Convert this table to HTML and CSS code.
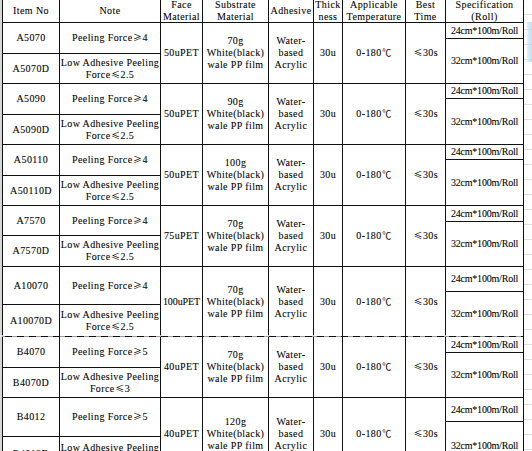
FILE: index.html
```html
<!DOCTYPE html>
<html>
<head>
<meta charset="utf-8">
<link rel="stylesheet" href="styles.css">
</head>
<body>
<div class="page">
  <div class="rowhead"></div>
  <div class="sheet">
    <div class="c"><span>Item No</span></div>
    <div class="c"><span>Note</span></div>
    <div class="c"><span>Face<br>Material</span></div>
    <div class="c"><span>Substrate<br>Material</span></div>
    <div class="c"><span>Adhesive</span></div>
    <div class="c"><span>Thick<br>ness</span></div>
    <div class="c"><span>Applicable<br>Temperature</span></div>
    <div class="c"><span>Best<br>Time</span></div>
    <div class="c"><span>Specification<br>(Roll)</span></div>

    <div class="c s2"><span>A5070</span></div>
    <div class="c s2"><span>Peeling Force<i class="fw">≥</i>4</span></div>
    <div class="c s3"><span>50uPET</span></div>
    <div class="c s3"><span>70g<br>White(black)<br>wale PP film</span></div>
    <div class="c s3"><span>Water-<br>based<br>Acrylic</span></div>
    <div class="c s3"><span>30u</span></div>
    <div class="c s3"><span>0-180<i class="fw">℃</i></span></div>
    <div class="c s3"><span><i class="fw">≤</i>30s</span></div>
    <div class="c sp"><span>24cm*100m/Roll</span></div>
    <div class="c s2 sp"><span>32cm*100m/Roll</span></div>
    <div class="c"><span>A5070D</span></div>
    <div class="c"><span>Low Adhesive Peeling<br>Force<i class="fw">≤</i>2.5</span></div>

    <div class="c s2"><span>A5090</span></div>
    <div class="c s2"><span>Peeling Force<i class="fw">≥</i>4</span></div>
    <div class="c s3"><span>50uPET</span></div>
    <div class="c s3"><span>90g<br>White(black)<br>wale PP film</span></div>
    <div class="c s3"><span>Water-<br>based<br>Acrylic</span></div>
    <div class="c s3"><span>30u</span></div>
    <div class="c s3"><span>0-180<i class="fw">℃</i></span></div>
    <div class="c s3"><span><i class="fw">≤</i>30s</span></div>
    <div class="c sp"><span>24cm*100m/Roll</span></div>
    <div class="c s2 sp"><span>32cm*100m/Roll</span></div>
    <div class="c"><span>A5090D</span></div>
    <div class="c"><span>Low Adhesive Peeling<br>Force<i class="fw">≤</i>2.5</span></div>

    <div class="c s2"><span>A50110</span></div>
    <div class="c s2"><span>Peeling Force<i class="fw">≥</i>4</span></div>
    <div class="c s3"><span>50uPET</span></div>
    <div class="c s3"><span>100g<br>White(black)<br>wale PP film</span></div>
    <div class="c s3"><span>Water-<br>based<br>Acrylic</span></div>
    <div class="c s3"><span>30u</span></div>
    <div class="c s3"><span>0-180<i class="fw">℃</i></span></div>
    <div class="c s3"><span><i class="fw">≤</i>30s</span></div>
    <div class="c sp"><span>24cm*100m/Roll</span></div>
    <div class="c s2 sp"><span>32cm*100m/Roll</span></div>
    <div class="c"><span>A50110D</span></div>
    <div class="c"><span>Low Adhesive Peeling<br>Force<i class="fw">≤</i>2.5</span></div>

    <div class="c s2"><span>A7570</span></div>
    <div class="c s2"><span>Peeling Force<i class="fw">≥</i>4</span></div>
    <div class="c s3"><span>75uPET</span></div>
    <div class="c s3"><span>70g<br>White(black)<br>wale PP film</span></div>
    <div class="c s3"><span>Water-<br>based<br>Acrylic</span></div>
    <div class="c s3"><span>30u</span></div>
    <div class="c s3"><span>0-180<i class="fw">℃</i></span></div>
    <div class="c s3"><span><i class="fw">≤</i>30s</span></div>
    <div class="c sp"><span>24cm*100m/Roll</span></div>
    <div class="c s2 sp"><span>32cm*100m/Roll</span></div>
    <div class="c"><span>A7570D</span></div>
    <div class="c"><span>Low Adhesive Peeling<br>Force<i class="fw">≤</i>2.5</span></div>

    <div class="c s2"><span>A10070</span></div>
    <div class="c s2"><span>Peeling Force<i class="fw">≥</i>4</span></div>
    <div class="c s3 tight"><span>100uPET</span></div>
    <div class="c s3"><span>70g<br>White(black)<br>wale PP film</span></div>
    <div class="c s3"><span>Water-<br>based<br>Acrylic</span></div>
    <div class="c s3"><span>30u</span></div>
    <div class="c s3"><span>0-180<i class="fw">℃</i></span></div>
    <div class="c s3"><span><i class="fw">≤</i>30s</span></div>
    <div class="c sp"><span>24cm*100m/Roll</span></div>
    <div class="c s2 sp"><span>32cm*100m/Roll</span></div>
    <div class="c"><span>A10070D</span></div>
    <div class="c"><span>Low Adhesive Peeling<br>Force<i class="fw">≤</i>2.5</span></div>

    <div class="c s2"><span>B4070</span></div>
    <div class="c s2"><span>Peeling Force<i class="fw">≥</i>5</span></div>
    <div class="c s3"><span>40uPET</span></div>
    <div class="c s3"><span>70g<br>White(black)<br>wale PP film</span></div>
    <div class="c s3"><span>Water-<br>based<br>Acrylic</span></div>
    <div class="c s3"><span>30u</span></div>
    <div class="c s3"><span>0-180<i class="fw">℃</i></span></div>
    <div class="c s3"><span><i class="fw">≤</i>30s</span></div>
    <div class="c sp"><span>24cm*100m/Roll</span></div>
    <div class="c s2 sp"><span>32cm*100m/Roll</span></div>
    <div class="c"><span>B4070D</span></div>
    <div class="c"><span>Low Adhesive Peeling<br>Force<i class="fw">≤</i>3</span></div>

    <div class="c s2"><span>B4012</span></div>
    <div class="c s2"><span>Peeling Force<i class="fw">≥</i>5</span></div>
    <div class="c s3"><span>40uPET</span></div>
    <div class="c s3"><span>120g<br>White(black)<br>wale PP film</span></div>
    <div class="c s3"><span>Water-<br>based<br>Acrylic</span></div>
    <div class="c s3"><span>30u</span></div>
    <div class="c s3"><span>0-180<i class="fw">℃</i></span></div>
    <div class="c s3"><span><i class="fw">≤</i>30s</span></div>
    <div class="c sp"><span>24cm*100m/Roll</span></div>
    <div class="c s2 sp"><span>32cm*100m/Roll</span></div>
    <div class="c"><span>B4012D</span></div>
    <div class="c"><span>Low Adhesive Peeling<br>Force<i class="fw">≤</i>3</span></div>
  </div>
  <div class="side">
    <div class="glow"></div>
  </div>
  <div class="watermark"></div>
</div>
</body>
</html>
```
FILE: styles.css
```css
html, body {
  margin: 0;
  padding: 0;
  background: #fff;
  overflow: hidden;
  height: 451px;
}
.page {
  position: relative;
  display: flex;
  align-items: flex-start;
  width: 532px;
  height: 451px;
  overflow: hidden;
}
.rowhead {
  width: 2px;
  height: 451px;
  background: #d4d8d4;
  flex: none;
}
.sheet {
  flex: none;
  display: grid;
  grid-template-columns: 56px 100px 41px 65px 44px 28px 62px 39px 77px;
  grid-template-rows:
    22px
    15px 14px 29px
    14px 15px 29px
    14px 15px 29px
    15px 13px 30px
    24px 12px 31px
    15px 14px 29px
    23px 14px 33px;
  gap: 1px;
  background: #111;
  border: 1px solid #111;
  border-top: none;
  font-family: "Liberation Serif", "Noto Sans CJK SC", serif;
  font-size: 10px;
  letter-spacing: 0.4px;
  line-height: 12px;
  color: #000;
  -webkit-text-stroke: 0.08px #000;
}
.c {
  background: #fff;
  display: flex;
  align-items: center;
  justify-content: center;
  text-align: center;
  white-space: nowrap;
  overflow: hidden;
}
.c span {
  display: block;
}
.sp {
  letter-spacing: -0.2px;
}
.tight {
  letter-spacing: -0.1px;
}
.s2 { grid-row: span 2; }
.s3 { grid-row: span 3; }
.fw {
  font-style: normal;
  font-family: "Noto Sans CJK SC", sans-serif;
  font-size: 9px;
  letter-spacing: 0;
  margin: 0 0.5px;
  -webkit-text-stroke: 0;
}
.side {
  flex: 1;
  height: 451px;
  background: repeating-linear-gradient(to bottom, #fff 0, #fff 14px, #dde0e3 14px, #dde0e3 15px);
  position: relative;
}
.glow {
  position: absolute;
  left: 3px;
  right: 0;
  top: 22px;
  height: 40px;
  background: linear-gradient(to right, #d6eaf7, #a9d0ea);
  opacity: 0.7;
}
.watermark {
  position: absolute;
  left: 0;
  right: 0;
  top: 335px;
  height: 2px;
  background: repeating-linear-gradient(to right, rgba(255,255,255,0.6) 0, rgba(255,255,255,0.6) 5px, transparent 5px, transparent 12px);
}
```
